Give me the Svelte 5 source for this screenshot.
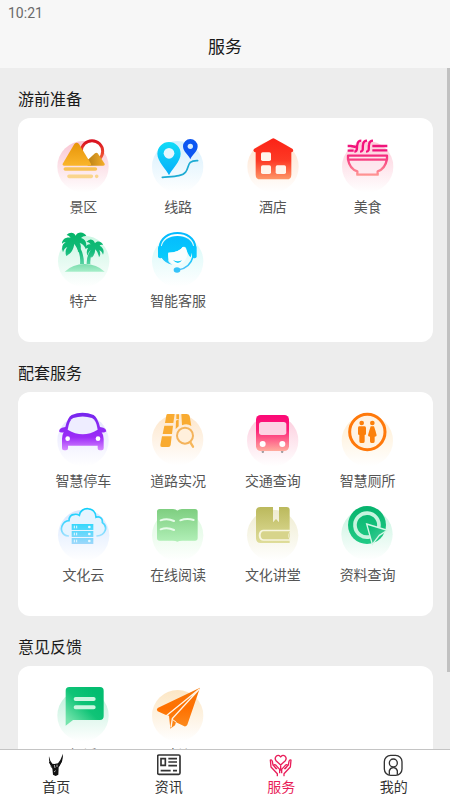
<script>
  const sections = [
    {
      title: '游前准备',
      items: [
        { id: 'scenic', label: '景区', box: '39 27 180 180', cx: 129, cy: 125, tint: '#f9c6d3' },
        { id: 'route', label: '线路', box: '324 27 180 180', cx: 413, cy: 125, tint: '#d5effd' },
        { id: 'hotel', label: '酒店', box: '39 27 180 180', cx: 129, cy: 125, tint: '#ffe2cc' },
        { id: 'food', label: '美食', box: '324 27 180 180', cx: 413, cy: 125, tint: '#fdccd9' },
        { id: 'palm', label: '特产', box: '39 24 180 180', cx: 131, cy: 124, tint: '#cbf6e3' },
        { id: 'agent', label: '智能客服', box: '324 24 180 180', cx: 413, cy: 124, tint: '#d5f9f8' }
      ]
    },
    {
      title: '配套服务',
      items: [
        { id: 'car', label: '智慧停车', box: '39 24 180 180', cx: 129, cy: 122, tint: '#e2e2ff' },
        { id: 'road', label: '道路实况', box: '324 24 180 180', cx: 413, cy: 119, tint: '#fde6cb' },
        { id: 'bus', label: '交通查询', box: '39 24 180 180', cx: 128, cy: 122, tint: '#fccbdc' },
        { id: 'toilet', label: '智慧厕所', box: '324 24 180 180', cx: 412, cy: 122, tint: '#ffedd0' },
        { id: 'cloud', label: '文化云', box: '39 21 180 180', cx: 131, cy: 121, tint: '#d6e6ff' },
        { id: 'book', label: '在线阅读', box: '324 21 180 180', cx: 413, cy: 121, tint: '#d9f9dc' },
        { id: 'lecture', label: '文化讲堂', box: '39 21 180 180', cx: 128, cy: 121, tint: '#efecd0' },
        { id: 'query', label: '资料查询', box: '324 21 180 180', cx: 411, cy: 118, tint: '#c6f3df' }
      ]
    },
    {
      title: '意见反馈',
      items: [
        { id: 'complaint', label: '投诉', box: '39 36 180 180', cx: 129, cy: 137, tint: '#bcefd9' },
        { id: 'advice', label: '建议', box: '324 36 180 180', cx: 413, cy: 137, tint: '#fce6c4' }
      ]
    }
  ];

  const tabs = [
    { id: 'home', label: '首页', box: '133 39 72 72' },
    { id: 'news', label: '资讯', box: '470 39 72 72' },
    { id: 'service', label: '服务', box: '133 39 72 72' },
    { id: 'mine', label: '我的', box: '470 39 72 72' }
  ];

  let active = $state('service');
  let viewHeight = $state(0);
  let contentHeight = $state(0);
  let scrolled = $state(0);
  let thumbHeight = $derived(contentHeight > viewHeight ? (viewHeight * viewHeight) / contentHeight : 0);
  let thumbTop = $derived(contentHeight ? (scrolled * viewHeight) / contentHeight : 0);
</script>

{#snippet serviceIcon(item)}
  <svg class="icon" viewBox={item.box} aria-hidden="true">
    <defs>
      <linearGradient id="bg-{item.id}" x1="0" y1="0" x2="0" y2="1">
        <stop offset="0" stop-color={item.tint} />
        <stop offset="1" stop-color={item.tint} stop-opacity="0" />
      </linearGradient>
    </defs>
    <circle cx={item.cx} cy={item.cy} r="77" fill="url(#bg-{item.id})" />
    {#if item.id === 'scenic'}
      <defs>
        <linearGradient id="sun" x1="0" y1="0" x2="0" y2="1"><stop offset="0" stop-color="#d9101f" /><stop offset="1" stop-color="#f76a38" /></linearGradient>
        <linearGradient id="hill" x1="0" y1="0" x2="0" y2="1"><stop offset="0" stop-color="#e79408" /><stop offset="1" stop-color="#fab52b" /></linearGradient>
        <linearGradient id="hill2" x1="0" y1="0" x2="1" y2="0"><stop offset="0" stop-color="#b98017" /><stop offset="1" stop-color="#f5ae29" /></linearGradient>
      </defs>
      <circle cx="156" cy="79" r="32" fill="#fff" stroke="url(#sun)" stroke-width="9" />
      <path d="M143 105L165 85q4-3 8 0L193 115q4 7-4 7H143z" fill="url(#hill2)" />
      <path d="M103 57q7-8 14 0L152 115q4 7-4 7H73q-8 0-4-7z" fill="url(#hill)" />
      <path d="M76 132H166" stroke="#f8c257" stroke-width="11" stroke-linecap="round" />
      <path d="M87 154H154M170 154h.1" stroke="#fad58d" stroke-width="11" stroke-linecap="round" />
    {:else if item.id === 'route'}
      <defs>
        <linearGradient id="pin" x1="0" y1="0" x2="0" y2="1"><stop offset="0" stop-color="#10dcf7" /><stop offset="1" stop-color="#08adfa" /></linearGradient>
      </defs>
      <path d="M367 157C398 154 427 155 437 141C449 126 439 106 473 107" fill="none" stroke="#1dabd3" stroke-width="5" stroke-linecap="round" />
      <path d="M387 151C379 132 352 110 352 86A35 35 0 0 1 422 86C422 110 395 132 387 151z" fill="url(#pin)" />
      <path d="M451 103C447 91 429 80 429 64A22 22 0 0 1 473 64C473 80 455 91 451 103z" fill="#0b56f2" />
      <circle cx="387" cy="85" r="16" fill="#e6f7fe" /><circle cx="451" cy="64" r="8" fill="#d3ebff" />
    {:else if item.id === 'hotel'}
      <defs>
        <linearGradient id="house" x1="0" y1="0" x2="0" y2="1"><stop offset="0" stop-color="#fb2216" /><stop offset=".55" stop-color="#fd3a25" /><stop offset="1" stop-color="#fd9768" /></linearGradient>
      </defs>
      <path d="M126 41q4-3 8 0L187 71q4 3 2 8q-1 3-5 3V149q0 14-14 14H91q-14 0-14-14V82q-5 0-6-4q-2-4 2-7z" fill="url(#house)" />
      <g fill="#fff4ec"><rect x="93" y="82" width="30" height="26" rx="5" /><rect x="93" y="121" width="30" height="26" rx="5" /><rect x="137" y="121" width="31" height="26" rx="5" /></g>
    {:else if item.id === 'food'}
      <defs>
        <linearGradient id="bowl" gradientUnits="userSpaceOnUse" x1="0" y1="88" x2="0" y2="153"><stop offset="0" stop-color="#f5257e" /><stop offset="1" stop-color="#ff9a94" /></linearGradient>
      </defs>
      <path d="M353 63h10l15 3M353 77h18M427 63h45M427 76h45" fill="none" stroke="#f0147b" stroke-width="7" />
      <path d="M373 80c12 0 6-12 9-21c1-8 4-12 12-12M390 80c12 0 7-12 9-21c1-8 4-12 12-12M408 80c12 0 7-12 9-21c1-8 4-12 12-12" fill="none" stroke="#f5107c" stroke-width="7" />
      <path d="M354 92H471V103Q465 133 443 139V149H382V139Q359 132 354 103zM354 104H471" fill="#fdeaf0" fill-opacity=".6" stroke="url(#bowl)" stroke-width="7" stroke-linejoin="round" />
    {:else if item.id === 'palm'}
      <defs>
        <linearGradient id="leaf" gradientUnits="userSpaceOnUse" x1="0" y1="36" x2="0" y2="134"><stop offset="0" stop-color="#04b568" /><stop offset=".6" stop-color="#13bb7b" /><stop offset="1" stop-color="#59d3a4" /></linearGradient>
        <linearGradient id="isle" x1="0" y1="0" x2="0" y2="1"><stop offset="0" stop-color="#7bdcad" /><stop offset="1" stop-color="#a6eec9" /></linearGradient>
      </defs>
      <path d="M74 155Q98 132 134 132T194 155z" fill="url(#isle)" />
      <path d="M104 63Q132 88 132 132H120Q124 97 100 68zM166 84Q149 105 151 132H140Q139 101 160 83z" fill="url(#leaf)" />
      <path d="M107 47C112 34 133 34 139 48Q129 47 123 54C135 56 143 70 137 86Q131 73 119 69C126 80 122 90 114 97Q113 80 103 70C101 89 94 100 79 108Q73 93 82 81Q73 84 69 97Q60 77 77 67Q71 66 66 71C66 56 82 50 92 54Q88 46 80 45C89 35 103 37 107 47z" fill="url(#leaf)" />
      <path d="M165 70C171 60 186 64 189 75Q182 72 179 77C189 81 194 93 189 104Q184 92 178 91Q184 104 177 112Q174 96 166 88Q165 105 155 113Q149 103 152 91Q145 95 143 107Q137 96 144 84Q139 84 137 88C135 76 144 71 152 73Q146 65 139 66Q149 54 159 61Q163 64 165 70z" fill="url(#leaf)" />
    {:else if item.id === 'agent'}
      <defs>
        <linearGradient id="hair" gradientUnits="userSpaceOnUse" x1="0" y1="36" x2="0" y2="155"><stop offset="0" stop-color="#04b9ff" /><stop offset=".6" stop-color="#07cafc" /><stop offset="1" stop-color="#5abef9" /></linearGradient>
      </defs>
      <path d="M364 82C358 36 467 36 461 82L468 79v38H357V79z" fill="#f4fdff" fill-opacity="0" />
      <path d="M359 82C363 25 462 25 466 82" fill="none" stroke="url(#hair)" stroke-width="6" />
      <path d="M365 84C366 36 459 36 460 84L452 112Q443 104 438 84Q435 79 428 81Q419 97 385 98V122Q371 122 363 110z" fill="url(#hair)" />
      <path d="M385 98Q419 97 428 81Q437 79 442 99C441 124 425 134 412 134C397 134 381 121 385 98z" fill="#fafefe" />
      <path d="M380 100C379 120 387 128 397 134Q375 131 364 112z" fill="url(#hair)" />
      <path d="M459 110Q450 145 414 150" fill="none" stroke="url(#hair)" stroke-width="5" />
      <rect x="354" y="77" width="14" height="38" rx="6" fill="url(#hair)" /><rect x="456" y="77" width="14" height="38" rx="6" fill="url(#hair)" />
      <ellipse cx="411" cy="150" rx="10" ry="8" fill="#35c3f9" />
      <path d="M399 120Q413 127 426 121Q414 138 399 120z" fill="#12caf8" />
    {:else if item.id === 'car'}
      <defs>
        <linearGradient id="auto" gradientUnits="userSpaceOnUse" x1="0" y1="38" x2="0" y2="151"><stop offset="0" stop-color="#7526ee" /><stop offset=".65" stop-color="#9c2cf7" /><stop offset="1" stop-color="#d78bff" /></linearGradient>
      </defs>
      <path d="M57 94q1-9 9-11L76 81Q83 52 95 45Q127 32 161 45Q173 53 180 81L190 83q8 2 9 11q-5 5-14 3Q191 105 191 117V145q0 6-6 6h-6q-6 0-6-6v-8H84v8q0 6-6 6h-6q-6 0-6-6V117Q66 105 71 97Q60 99 57 94z" fill="url(#auto)" />
      <path d="M83 89Q88 59 100 54Q128 45 156 54Q169 60 173 89Q128 116 83 89z" fill="#eeedff" />
      <circle cx="83" cy="116" r="7" fill="#fff" /><circle cx="174" cy="116" r="7" fill="#fff" />
    {:else if item.id === 'road'}
      <g fill="#f9ab31">
        <path d="M383 42H404L400 69H375L379 46q1-4 4-4zM373 77H399L396 102H368zM366 109H395L392 135q-1 6-7 6H366q-6 0-5-6z" />
        <path d="M409 43h8v14h-8zM424 42H440q7 0 9 6L454 78Q441 69 426 76zM408 62l8-4v21l-9 8z" />
      </g>
      <circle cx="435" cy="107" r="24" fill="#fff0dc" stroke="#f4b35b" stroke-width="6" />
      <path d="M451 127L459 140" stroke="#f7b75b" stroke-width="7" stroke-linecap="round" />
    {:else if item.id === 'bus'}
      <defs>
        <linearGradient id="coach" x1="0" y1="0" x2="0" y2="1"><stop offset="0" stop-color="#fb0876" /><stop offset=".4" stop-color="#fd1c77" /><stop offset="1" stop-color="#ffad9f" /></linearGradient>
      </defs>
      <path d="M94 151h9l-2 8h-5zM152 151h9l-2 8h-5z" fill="#a5a0a2" />
      <rect x="78" y="45" width="99" height="108" rx="14" fill="url(#coach)" />
      <rect x="87" y="66" width="82" height="39" rx="8" fill="#fdd2e3" />
      <circle cx="98" cy="132" r="9" fill="#fff" /><circle cx="157" cy="132" r="9" fill="#fff" />
    {:else if item.id === 'toilet'}
      <circle cx="412" cy="96" r="53" fill="#fff3e3" stroke="#ff790b" stroke-width="9" />
      <g fill="#fb800c">
        <circle cx="395" cy="69" r="7" /><circle cx="427" cy="69" r="7" />
        <path d="M387 79H404q4 0 4 5V101q0 4-4 4V124q0 5-4 5H392q-4 0-4-5V105q-4 0-4-4V84q0-5 3-5z" />
        <path d="M422 79H432q5 14 8 27q0 4-6 4V124q0 5-4 5H424q-4 0-4-5V110q-6 0-6-4Q418 91 422 79z" />
      </g>
    {:else if item.id === 'cloud'}
      <defs>
        <linearGradient id="sky" gradientUnits="userSpaceOnUse" x1="0" y1="40" x2="0" y2="126"><stop offset="0" stop-color="#10cffa" /><stop offset=".5" stop-color="#42d5ff" /><stop offset="1" stop-color="#a5e1ff" /></linearGradient>
        <linearGradient id="rack" gradientUnits="userSpaceOnUse" x1="0" y1="87" x2="0" y2="147"><stop offset="0" stop-color="#35d8fc" /><stop offset="1" stop-color="#9ed7fb" /></linearGradient>
      </defs>
      <path d="M85 123C65 121 60 101 68 89Q74 78 87 77Q87 59 104 58Q112 57 118 61C121 34 167 33 168 67Q177 63 184 70Q188 75 187 83C205 95 197 121 171 123" fill="#e6f4ff" stroke="url(#sky)" stroke-width="5" stroke-linecap="round" />
      <path d="M95 87h65v18H95zM95 108h65v18H95zM95 129h65v18H95z" fill="url(#rack)" />
      <path d="M103 92v8M110 92v8M103 113v8M110 113v8M103 134v8M110 134v8" stroke="#eaf9ff" stroke-width="3" />
      <g fill="#eaf9ff"><circle cx="148" cy="96" r="4" /><circle cx="148" cy="117" r="4" /><circle cx="148" cy="138" r="4" /></g>
    {:else if item.id === 'book'}
      <defs>
        <linearGradient id="pages" x1="0" y1="0" x2="0" y2="1"><stop offset="0" stop-color="#7ece80" /><stop offset="1" stop-color="#b1efb7" /></linearGradient>
      </defs>
      <path d="M359 42H399Q408 42 412 47Q417 42 426 42H465q8 0 8 8V129q0 8-8 8H427Q417 137 412 140Q407 137 398 137H359q-8 0-8-8V50q0-8 8-8z" fill="url(#pages)" />
      <path d="M362 76Q382 68 402 78M362 103Q382 95 402 105M421 76Q441 68 461 75" fill="none" stroke="#e7fbe9" stroke-width="6" stroke-linecap="round" />
    {:else if item.id === 'lecture'}
      <defs>
        <linearGradient id="tome" x1="0" y1="0" x2="0" y2="1"><stop offset="0" stop-color="#bbb95c" /><stop offset="1" stop-color="#dfdd9a" /></linearGradient>
      </defs>
      <path d="M91 36H129V82L138 72L147 82V36H170q9 0 9 9V144H92q-14 0-14-14V49q0-13 13-13z" fill="url(#tome)" />
      <path d="M181 104H99C82 104 82 137 99 137H181V132Q172 121 181 110z" fill="#f7f5df" />
      <path d="M180 109H101C89 109 89 133 101 133H178Q171 120 180 109z" fill="#d7d48b" />
    {:else if item.id === 'query'}
      <defs>
        <linearGradient id="dial" x1="0" y1="0" x2="0" y2="1"><stop offset="0" stop-color="#06b36d" /><stop offset="1" stop-color="#21cb86" /></linearGradient>
        <linearGradient id="arrow" x1="0" y1="0" x2="1" y2="1"><stop offset="0" stop-color="#02b96f" /><stop offset="1" stop-color="#4ed09f" /></linearGradient>
      </defs>
      <circle cx="411" cy="90" r="57" fill="url(#dial)" />
      <path d="M446 98A36 36 0 1 0 420 125" fill="none" stroke="#c7f4df" stroke-width="11" />
      <path d="M410 87L472 106L448 121L427 148z" fill="url(#arrow)" stroke="#d5f7e7" stroke-width="4" />
    {:else if item.id === 'complaint'}
      <defs>
        <linearGradient id="bubble" gradientUnits="userSpaceOnUse" x1="77" y1="145" x2="160" y2="60"><stop offset="0" stop-color="#75e4ac" /><stop offset=".55" stop-color="#10c477" /><stop offset="1" stop-color="#03bd70" /></linearGradient>
      </defs>
      <path d="M88 51H180q11 0 11 11V139q0 11-11 11H99L77 167V62q0-11 11-11z" fill="url(#bubble)" />
      <path d="M107 87H161M107 112H161" stroke="#cdf6e1" stroke-width="12" stroke-linecap="round" />
    {:else if item.id === 'advice'}
      <defs>
        <linearGradient id="plane" x1="0" y1="0" x2="0" y2="1"><stop offset="0" stop-color="#f5780b" /><stop offset=".5" stop-color="#ff7000" /><stop offset="1" stop-color="#fb8d20" /></linearGradient>
      </defs>
      <path d="M480 53L353 114Q348 119 353 124L376 134L387 137L391 176L405 166L408 157L433 169Q439 170 442 164z" fill="url(#plane)" />
      <path d="M479 56L379 137M478 57L397 146L393 172" fill="none" stroke="#fff5e7" stroke-width="4" />
      <path d="M397 148L409 157" stroke="#fff5e7" stroke-width="3" />
    {/if}
  </svg>
{/snippet}

{#snippet tabIcon(tab)}
  <svg class="tab-icon" viewBox={tab.box} aria-hidden="true" fill="none" stroke="currentColor" stroke-width="4">
    {#if tab.id === 'home'}
      <path d="M148 49L152 62L158 71L164 72L175 70L182 60L190 41Q190 60 184 70L177 82L176 104L168 108L160 104L158 84L151 72Q147 62 148 49z" fill="#111" stroke="none" />
      <path d="M149 66l7 13M186 62l-9 18M154 79l6 7" stroke="#111" stroke-width="3" />
      <path d="M164 75l2 9M172 74v7M163 96l5-4" stroke="#fff" stroke-width="2" />
    {:else if tab.id === 'news'}
      <rect x="472" y="45" width="67" height="58" rx="4" stroke-width="5" />
      <path d="M482 56H495V76H482zM504 56H530M504 66H530M504 77H530M481 92H511M518 92H530" stroke-width="5" />
    {:else if tab.id === 'service'}
      <path d="M168 75L154 62C147 52 160 39 168 51C176 39 189 52 182 62z" stroke-linejoin="round" />
      <path d="M158 107V101L139 81L137 60Q141 58 143 64L145 75L156 86M154 86L147 77Q149 71 154 76L165 88V98M178 107V101L197 81L199 60Q195 58 193 64L191 75L180 86M182 86L189 77Q187 71 182 76L171 88V98M168 78v12" stroke-linecap="round" stroke-linejoin="round" />
    {:else if tab.id === 'mine'}
      <rect x="477" y="46" width="53" height="60" rx="19" />
      <circle cx="504" cy="69" r="12" />
      <path d="M492 104V92Q495 83 504 83T516 92V104" />
    {/if}
  </svg>
{/snippet}

<div class="app">
  <header>
    <time>10:21</time>
    <h1>服务</h1>
  </header>

  <div class="viewport">
    <main bind:clientHeight={viewHeight} onscroll={(e) => (scrolled = e.currentTarget.scrollTop)}>
      <div class="content" bind:offsetHeight={contentHeight}>
        {#each sections as section}
          <section>
            <h2>{section.title}</h2>
            <div class="card">
              {#each section.items as item}
                <a class="service" href="#{item.id}">
                  {@render serviceIcon(item)}
                  <span>{item.label}</span>
                </a>
              {/each}
            </div>
          </section>
        {/each}
      </div>
    </main>
    <div class="thumb" style="height: {thumbHeight}px; top: {thumbTop}px"></div>
  </div>

  <nav>
    {#each tabs as tab}
      <a class="tab" class:active={active === tab.id} href="#{tab.id}" onclick={() => (active = tab.id)}>
        {@render tabIcon(tab)}
        <span>{tab.label}</span>
      </a>
    {/each}
  </nav>
</div>

<style>
  .app {
    display: flex;
    flex-direction: column;
    height: 100vh;
    background: #ededed;
    color: #1a1a1a;
    font-family: 'Noto Sans CJK SC', sans-serif;
  }
  header {
    flex: none;
    background: #f7f7f7;
    padding-bottom: 8px;
  }
  time {
    display: block;
    padding: 0 8px;
    font: 400 14px/26px Roboto, sans-serif;
    color: #6a6a6a;
  }
  h1 {
    margin: 6px 0 0;
    font-size: 17px;
    line-height: 28px;
    font-weight: 400;
    text-align: center;
  }
  .viewport {
    position: relative;
    flex: 1;
    min-height: 0;
  }
  main {
    height: 100%;
    overflow-y: auto;
    scrollbar-width: none;
  }
  .content {
    padding: 0 17px 40px 18px;
  }
  .thumb {
    position: absolute;
    right: 0;
    width: 3px;
    background: #c1c1c1;
  }
  h2 {
    margin: 0;
    padding: 19px 0 9px;
    font-size: 16px;
    line-height: 22px;
    font-weight: 400;
  }
  .card {
    display: grid;
    grid-template-columns: repeat(4, 1fr);
    padding: 16px 18px 20px;
    border-radius: 12px;
    background: #fff;
  }
  .service {
    display: flex;
    flex-direction: column;
    align-items: center;
    gap: 2px;
    padding-bottom: 12px;
    font-size: 14px;
    line-height: 20px;
    color: #555;
    text-decoration: none;
  }
  .icon {
    width: 60px;
    height: 60px;
  }
  nav {
    flex: none;
    display: flex;
    border-top: 1px solid #c4c4c4;
    background: #fff;
  }
  .tab {
    flex: 1;
    display: flex;
    flex-direction: column;
    align-items: center;
    padding: 3px 0;
    font-size: 14px;
    line-height: 19px;
    padding-bottom: 4px;
    color: #333;
    text-decoration: none;
  }
  .tab.active {
    color: #e91e5a;
  }
  .tab-icon {
    width: 24px;
    height: 24px;
  }
</style>
